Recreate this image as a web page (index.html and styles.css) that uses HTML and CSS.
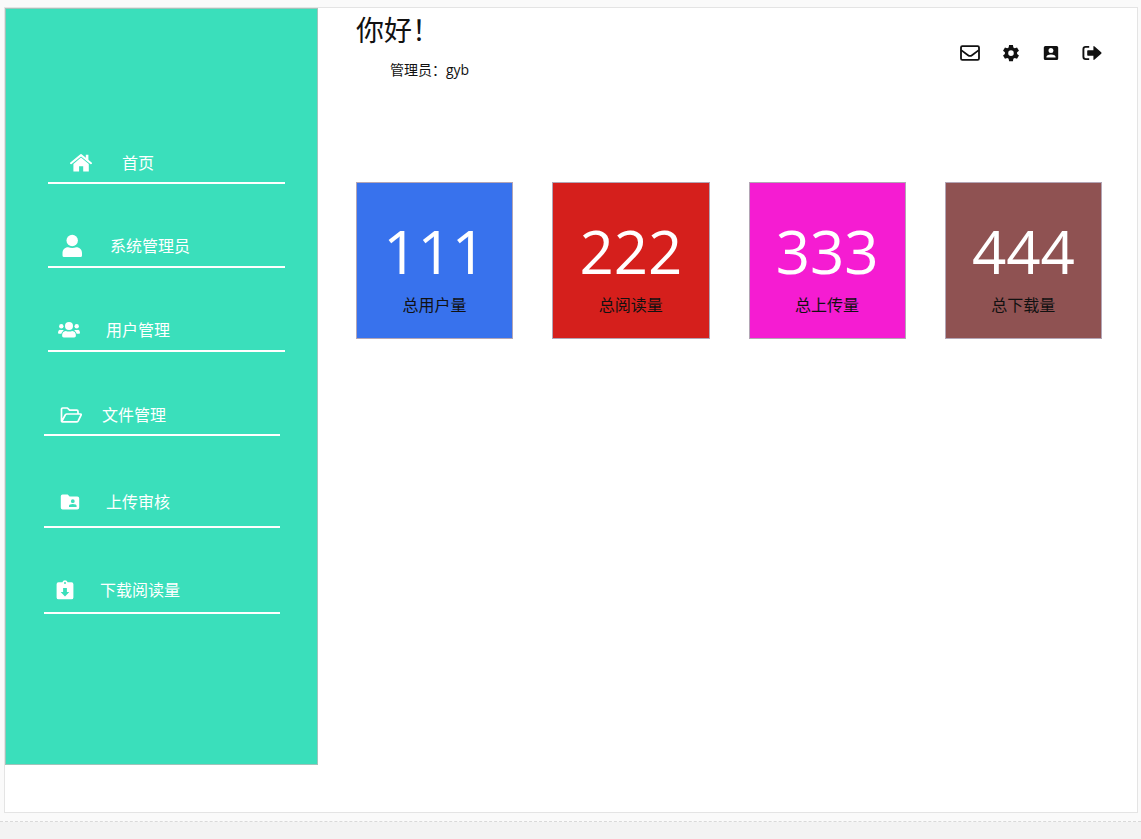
FILE: index.html
```html
<!DOCTYPE html>
<html lang="zh-CN">
<head>
<meta charset="utf-8">
<meta name="viewport" content="width=device-width, initial-scale=1">
<title>管理后台</title>
<link rel="stylesheet" href="styles.css">
</head>
<body>
<div class="stage">
  <div class="frame">
    <nav class="sidebar" aria-label="主菜单">
      <a class="nav-item nav-home" href="#home">
        <svg class="icon-22" viewBox="0 0 22 18" aria-hidden="true"><path d="M1 9.2 11 1.1l10 8.1" fill="none" stroke="currentColor" stroke-width="2" stroke-linecap="round" stroke-linejoin="round"/><path d="M15.8 0.8h2.6v7l-2.6-2.1zM11 3.600l7.800 6.400v7.500h-5.600v-5.300H9.1v5.300H3.400V10z" fill="currentColor"/></svg>
        <span>首页</span>
      </a>
      <a class="nav-item nav-admin" href="#admin">
        <svg class="icon-22" viewBox="0 0 22 24" aria-hidden="true"><circle cx="10.2" cy="6.5" r="5.7" fill="currentColor"/><path d="M6.2 13.3c2.6.8 5.400.8 8 0 3.600 0 5.800 2.500 5.800 6v2.200q0 1.500-1.500 1.500h-16.500Q.5 23 .5 21.500v-2.200c0-3.500 2.200-6 5.700-6z" fill="currentColor"/></svg>
        <span>系统管理员</span>
      </a>
      <a class="nav-item nav-users" href="#users">
        <svg class="icon-22" viewBox="0 0 22 16" aria-hidden="true"><g fill="currentColor"><circle cx="11" cy="4" r="4"/><circle cx="3.300" cy="4.300" r="2.200"/><circle cx="18.700" cy="4.300" r="2.200"/><path d="M7.800 9q3.200 1.200 6.400 0c2.500.2 3.700 2 3.700 4.200 0 1.500-.6 2.200-1.700 2.200H5.800c-1.100 0-1.700-.7-1.700-2.200C4.100 11 5.300 9.200 7.800 9zM1.800 7.700q1.700.7 3.300.2l.6.500Q3.800 9.700 3.300 11.700H.9Q0 11.700 0 10.700 0 8.200 1.800 7.700zM20.200 7.700q-1.700.7-3.300.2l-.6.500q1.900 1.300 2.400 3.300h2.400q.9 0 .9-1 0-2.500-1.800-3z"/></g></svg>
        <span>用户管理</span>
      </a>
      <a class="nav-item nav-files" href="#files">
        <svg class="icon-22" viewBox="0 0 22 16" aria-hidden="true"><path d="M1.500 14.500V2.300Q1.500 1 2.700 1h4.700l2.200 2.200h7.200q1.200 0 1.200 1.200v2.300M1.700 14.600 5.200 8Q5.600 7 6.700 7h13.800q1.100 0 .6 1l-2.900 5.800q-.6 1.100-1.700 1.100H2.300q-.8 0-.8-.8" fill="none" stroke="currentColor" stroke-width="1.700" stroke-linejoin="round"/></svg>
        <span>文件管理</span>
      </a>
      <a class="nav-item nav-review" href="#review">
        <svg class="icon-20" viewBox="0 0 20 16" aria-hidden="true"><path fill="currentColor" fill-rule="evenodd" d="M2.500.5h5.200L9.600 2.400H17.300q1.900 0 1.900 1.900v9.200q0 1.900-1.900 1.900H2.500Q.8 15.400.8 13.500V2.300Q.8.500 2.500.5zM12.800 5.300a1.900 1.900 0 1 0 0 3.800 1.900 1.900 0 0 0 0-3.800zM9 12.900h7.600v-.9q0-1.900-3.800-1.900T9 12z"/></svg>
        <span>上传审核</span>
      </a>
      <a class="nav-item nav-downloads" href="#downloads">
        <svg class="icon-18" viewBox="0 0 18 20" aria-hidden="true"><path fill="currentColor" fill-rule="evenodd" d="M2.500 2.300h3.900a2.700 2.700 0 0 1 5.200 0h3.900q1.900 0 1.900 1.900V17.400q0 1.900-1.900 1.900H2.500Q.6 19.300.6 17.400V4.200Q.6 2.300 2.500 2.300zM9 2.100a1 1 0 1 0 0 2 1 1 0 0 0 0-2zM7.100 8.100v4H4.700L9 16.400l4.300-4.300h-2.400v-4z"/></svg>
        <span>下载阅读量</span>
      </a>
    </nav>
    <main class="content">
      <header class="topbar">
        <div>
          <h1 class="greeting">你好！</h1>
          <p class="role">管理员：gyb</p>
        </div>
        <div class="actions">
          <button type="button" class="action" aria-label="消息"><svg class="icon-20" viewBox="0 0 20 16" aria-hidden="true"><rect x="1" y="1.200" width="18" height="13.600" rx="1.300" fill="none" stroke="currentColor" stroke-width="1.800"/><path d="M1.200 5.100 8 10.200q2 1.500 4 0l6.800-5.100" fill="none" stroke="currentColor" stroke-width="1.800"/></svg></button>
          <button type="button" class="action" aria-label="设置"><svg class="icon-18" viewBox="0 0 26 26" aria-hidden="true"><path fill="currentColor" fill-rule="evenodd" d="M10.200 1.500h5.600l.6 3.500 2 1.200 3.300-1.200 2.800 4.800-2.700 2.200v2.400l2.700 2.200-2.800 4.800-3.300-1.200-2 1.200-.6 3.500h-5.600l-.6-3.500-2-1.200-3.300 1.200-2.800-4.800 2.700-2.200V12L1.500 9.800l2.800-4.800 3.300 1.200 2-1.200zM13 9.200a4 4 0 1 0 0 8 4 4 0 0 0 0-8z"/></svg></button>
          <button type="button" class="action" aria-label="个人资料"><svg class="icon-18" viewBox="0 0 18 18" aria-hidden="true"><path fill="currentColor" fill-rule="evenodd" d="M3.400 2h11.200q1.600 0 1.600 1.600v10.900q0 1.600-1.600 1.600H3.400q-1.600 0-1.600-1.600V3.600Q1.800 2 3.400 2zM9 4.100a2.500 2.500 0 1 0 0 5 2.500 2.500 0 0 0 0-5zM4.400 13.600h9.200v-.7q0-2.500-4.600-2.500t-4.600 2.500z"/></svg></button>
          <button type="button" class="action" aria-label="退出"><svg class="icon-20" viewBox="0 0 20 16" aria-hidden="true"><path d="M7.200 1.900H3.700q-2.300 0-2.300 2.300v7.600q0 2.300 2.300 2.300h3.500" fill="none" stroke="currentColor" stroke-width="1.900"/><path d="M6 5.300h5.400V1.800q0-1.100.9-.5l6.900 6q.8.700 0 1.400l-6.900 6q-.9.600-.9-.5v-3.500H6q-.8 0-.8-.8V6.100q0-.8.800-.8z" fill="currentColor"/></svg></button>
        </div>
      </header>
      <section class="stats" aria-label="统计">
        <article class="card blue"><strong class="number">111</strong><span class="label">总用户量</span></article>
        <article class="card red"><strong class="number">222</strong><span class="label">总阅读量</span></article>
        <article class="card pink"><strong class="number">333</strong><span class="label">总上传量</span></article>
        <article class="card brown"><strong class="number">444</strong><span class="label">总下载量</span></article>
      </section>
    </main>
  </div>
</div>
</body>
</html>
```
FILE: styles.css
```css
* {
  box-sizing: border-box;
}

body {
  margin: 0;
  min-height: 100vh;
  display: flex;
  flex-direction: column;
  background: #f3f3f3;
  color: #111;
  font-family: "Open Sans", "Noto Sans CJK SC", sans-serif;
  font-size: 16px;
}

.stage {
  flex: 1;
  display: flex;
  margin-bottom: 17px;
  padding: 7px 3px 8px 4px;
  background: #fafafa;
  border-bottom: 1px dashed #d9d9d9;
}

.frame {
  flex: 1;
  display: flex;
  align-items: flex-start;
  background: #fff;
  border: 1px solid #e4e4e4;
}

.sidebar {
  flex: 0 0 313px;
  display: flex;
  flex-direction: column;
  padding: 142px 32px 150px 42px;
  background: #3adfbb;
  border: 1px solid #9fc4ba;
}

.nav-item {
  display: flex;
  align-items: center;
  gap: 26px;
  margin-bottom: 50px;
  padding-bottom: 7px;
  border-bottom: 2px solid #fff;
  color: #fff;
  line-height: 24px;
  text-decoration: none;
}

.nav-home {
  gap: 30px;
  padding-left: 22px;
}

.nav-admin {
  padding-left: 14px;
}

.nav-users {
  margin-bottom: 51px;
  padding-left: 10px;
}

.nav-admin,
.nav-users {
  padding-bottom: 8px;
}

.nav-files,
.nav-review,
.nav-downloads {
  margin-left: -4px;
  margin-right: 5px;
  padding-left: 16px;
}

.nav-files {
  gap: 20px;
  margin-bottom: 54px;
}

.nav-review {
  padding-bottom: 12px;
}

.nav-downloads {
  margin-bottom: 0;
  padding-bottom: 10px;
  padding-left: 12px;
}

.icon-22,
.icon-20,
.icon-18 {
  display: block;
  flex: none;
}

.icon-22 {
  width: 22px;
}

.icon-20 {
  width: 20px;
}

.icon-18 {
  width: 18px;
}

.content {
  flex: 1;
  padding: 0 35px 40px 38px;
}

.topbar {
  display: flex;
  justify-content: space-between;
  margin-bottom: 102px;
}

.greeting {
  margin: 0;
  font-size: 28px;
  font-weight: 400;
  line-height: 44px;
}

.role {
  margin: 8px 0 0 34px;
  font-size: 14px;
  line-height: 20px;
}

.actions {
  display: flex;
  align-items: center;
  align-self: flex-start;
  gap: 22px;
  padding-top: 36px;
}

.action {
  padding: 0;
  border: 0;
  background: none;
  color: #111;
}

.stats {
  display: grid;
  grid-template-columns: repeat(4, 1fr);
  gap: 39px;
}

.card {
  aspect-ratio: 1;
  display: flex;
  flex-direction: column;
  align-items: center;
  justify-content: center;
  padding-top: 4px;
  border: 1px solid #b3a5b5;
}

.blue {
  background: #3872ed;
}

.red {
  background: #d51f1c;
}

.pink {
  background: #f51cd2;
}

.brown {
  background: #8f5252;
}

.number {
  color: #fff;
  font-size: 60px;
  font-weight: 500;
  line-height: 84px;
}

.label {
  line-height: 24px;
}
```
